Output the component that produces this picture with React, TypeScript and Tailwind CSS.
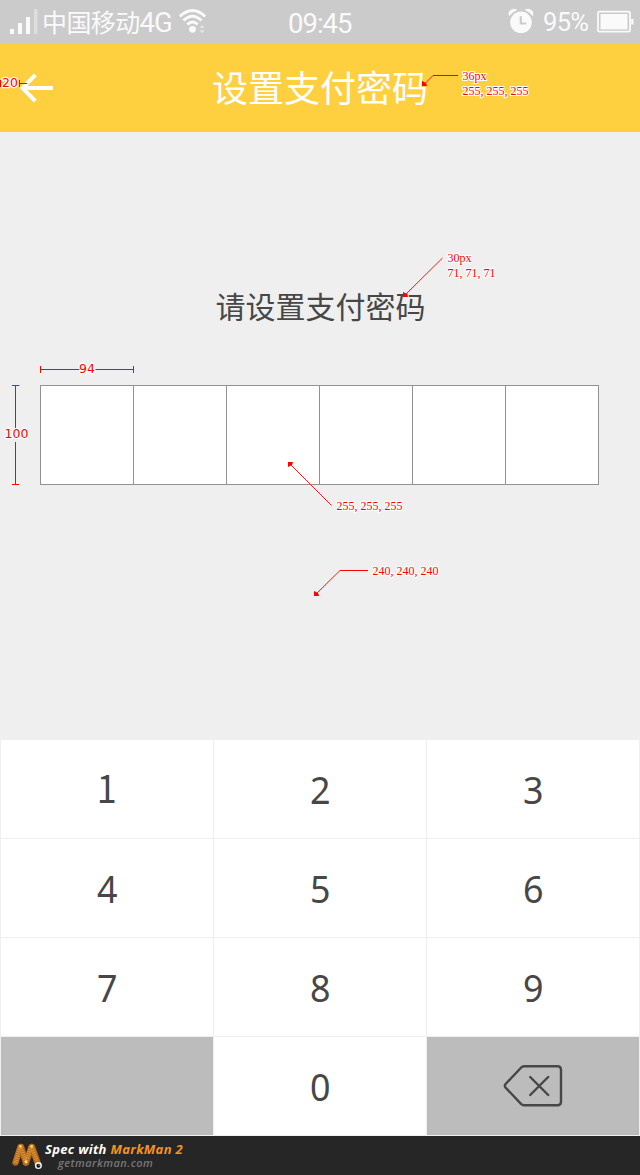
import React from 'react';

const CJK = "font-['Noto_Sans_CJK_SC',sans-serif]";

function StatusBar() {
  return (
    <div className={`relative flex h-11 items-center bg-[#cbcbcb] text-[#fafafa] ${CJK}`}>
      <svg className="ml-[9px] h-[44px] w-[30px]" viewBox="0 0 30 44" fill="#fafafa">
        <rect x="1" y="29" width="4" height="5" />
        <rect x="9" y="23" width="4" height="11" />
        <rect x="17" y="17" width="4" height="17" />
        <rect x="25" y="9" width="3.5" height="25" fill="#dedede" />
      </svg>
      <div className="ml-[3px] flex h-[44px] w-[134px] whitespace-nowrap pb-[2px]">
        <span className="text-[25px] leading-[42px] tracking-[-0.6px]">中国移动</span>
        <span className="pt-px font-['Roboto',sans-serif] text-[27.5px] leading-[44px] tracking-[-1px]">4G</span>
      </div>
      <svg className="ml-[3px] h-[44px] w-[28px]" viewBox="0 0 28 44" fill="none" stroke="#fafafa" strokeWidth="3">
        <path d="M0.8 16.5 Q13.5 4.5 26.2 16.5" />
        <path d="M4.5 20.5 Q13.5 12 22.5 20.5" />
        <path d="M8.3 24.5 Q13.5 19.5 18.7 24.5" />
        <circle cx="13.5" cy="29.3" r="3.4" fill="#fafafa" stroke="none" />
        <path d="M20.5 28 L23 25 L25.5 28Z M20.5 30.3 L25.5 30.3 L23 33.3Z" fill="#e6e6e6" stroke="none" />
      </svg>
      <span className="absolute left-[288px] top-[2px] whitespace-nowrap font-['Roboto',sans-serif] text-[27.5px] leading-[44px] tracking-[-1px]">09:45</span>
      <div className="ml-auto mr-[6px] flex items-center">
        <svg className="h-[44px] w-[26px]" viewBox="0 0 26 44">
          <g fill="#fafafa">
            <circle cx="13" cy="22.3" r="10.8" />
            <path d="M1.3 15.5 Q0.2 12 2.6 10.4 Q5.4 8.4 8.6 9.8 Q4 11.8 1.3 15.5Z M24.7 15.5 Q25.8 12 23.4 10.4 Q20.6 8.4 17.4 9.8 Q22 11.8 24.7 15.5Z" stroke="#fafafa" strokeWidth="1" />
          </g>
          <path d="M12.8 16.3 V23.5 H18.3" fill="none" stroke="#cbcbcb" strokeWidth="2.2" />
        </svg>
        <span className="ml-[9px] w-[48px] whitespace-nowrap font-['Roboto',sans-serif] text-[25.5px] leading-[42px] tracking-[-0.7px]">95%</span>
        <svg className="ml-[5px] h-[44px] w-[38px]" viewBox="0 0 38 44" fill="none">
          <rect x="2" y="11.7" width="32" height="20" rx="1.5" stroke="#fafafa" strokeWidth="1.8" />
          <rect x="4.5" y="14" width="27" height="15.4" fill="#fafafa" />
          <path d="M35.2 19 h2.3 v5.5 h-2.3z" fill="#fafafa" />
        </svg>
      </div>
    </div>
  );
}

function Header() {
  return (
    <header className="relative flex h-[88px] items-center justify-center bg-[#fed03f]">
      <svg className="absolute left-[20px] top-[29px] h-[30px] w-[34px]" viewBox="0 0 34 30" fill="none" stroke="#fff" strokeWidth="4">
        <path d="M2.5 15 H33 M15.3 1.8 L2.6 15 L15.3 28.2" />
      </svg>
      <h1 className={`whitespace-nowrap pb-[3px] text-[36px] leading-[85px] text-white ${CJK}`}>设置支付密码</h1>
    </header>
  );
}

function BackspaceIcon() {
  return (
    <svg className="h-[44px] w-[60px]" viewBox="0 0 60 44" fill="none" stroke="#474747" strokeWidth="2.4" strokeLinecap="round" strokeLinejoin="round">
      <path d="M21 2.3 H54.5 Q58 2.3 58 5.8 V37.7 Q58 41.2 54.5 41.2 H21 Q19.5 41.2 18 39.8 L2.6 23.6 Q1 21.8 2.6 20 L18 3.7 Q19.5 2.3 21 2.3Z" />
      <path d="M27.2 13 L45.2 31 M45.2 13 L27.2 31" />
    </svg>
  );
}

function Key({ label }: { label: string }) {
  const font =
    label === '1' ? "font-['Noto_Sans_CJK_SC',sans-serif] pb-[5px] pr-px" : "font-['Noto_Sans',sans-serif] pb-[2px]";
  return (
    <button className={`flex h-[98px] items-center justify-center bg-white text-[39px] leading-none text-[#474747] ${font}`}>
      <span className="scale-x-[0.92]">{label}</span>
    </button>
  );
}

function Keypad() {
  return (
    <div className="grid grid-cols-3 gap-px bg-[#efefef] px-px pb-px">
      {['1', '2', '3', '4', '5', '6', '7', '8', '9'].map((n) => (
        <Key key={n} label={n} />
      ))}
      <div className="h-[98px] bg-[#bcbcbc]" />
      <Key label="0" />
      <button className="flex h-[98px] items-center justify-center bg-[#bcbcbc]">
        <BackspaceIcon />
      </button>
    </div>
  );
}

function Footer() {
  return (
    <footer className="flex h-[39px] bg-[#262626]">
      <svg className="ml-[11px] mt-[6px] h-[30px] w-[34px]" viewBox="0 0 34 30" fill="none" strokeLinecap="round">
        <g stroke="#b56a1b" strokeWidth="6.4">
          <path d="M9.5 5 L4.5 20.5" />
          <path d="M10 5 L15 20.5" />
          <path d="M20.5 5 L15 20.5" />
          <path d="M21 5 L27 22" />
        </g>
        <g stroke="#d9943c" strokeWidth="4" strokeLinecap="butt" strokeDasharray="1.2 1">
          <path d="M9 5 L4.5 21" />
          <path d="M20 5 L15 20" />
          <path d="M10 6 L15 20" />
          <path d="M21 6 L26 19" />
        </g>
        <circle cx="9.5" cy="4.2" r="1.3" fill="#ffe07a" />
        <circle cx="20.7" cy="4.2" r="1.3" fill="#ffe07a" />
        <circle cx="15" cy="20" r="1.4" fill="#ffe07a" />
        <circle cx="27.4" cy="23.6" r="3.5" fill="#f4f4f4" />
        <circle cx="27.4" cy="23.8" r="2" fill="#111" />
        <circle cx="28" cy="23.1" r="0.6" fill="#fff" />
      </svg>
      <div className="flex flex-col whitespace-nowrap pt-[5px] font-['Open_Sans',sans-serif] italic">
        <span className="text-[13px] font-bold leading-[17px] tracking-[0.33px] text-white">
          Spec with <span className="text-[#f7931a]">MarkMan 2</span>
        </span>
        <span className="ml-[13px] text-[11px] font-semibold leading-[10px] tracking-[0.45px] text-[#777]">getmarkman.com</span>
      </div>
    </footer>
  );
}

function Annotations() {
  return (
    <svg className="pointer-events-none absolute left-0 top-0 h-[1175px] w-[640px]" viewBox="0 0 640 1175" fill="none">
      <g stroke="#f00" shapeRendering="crispEdges">
        <path d="M0.5 80 V87 M19.5 80 V87 M20 83.5 H27" />
        <path d="M40.5 366 V373 M133.5 366 V373 M41 369.5 H133" />
        <path d="M12 385.5 H19 M12 484.5 H19 M15.5 386 V484" />
        <path d="M433 75.5 H458 M340 570.5 H368" />
      </g>
      <g stroke="#f00" strokeWidth="0.9">
        <path d="M433 75.5 L424 84.5" />
        <path d="M442.5 258 L404 296" />
        <path d="M331.5 505.5 L290 464" />
        <path d="M340 570.5 L315 595" />
      </g>
      <g fill="#f00">
        <path d="M422 81 L426 83 L427 86 H422Z" />
        <path d="M403 292 L407 294 L408 297 H403Z" />
        <path d="M288 462 H293 L292 465 L288 467Z" />
        <path d="M314 591 L318 593 L319 596 H314Z" />
      </g>
      <g
        className="font-['DejaVu_Sans',sans-serif] text-[12.5px]"
        fill="#f00"
        stroke="#fff"
        strokeWidth="2.5"
        strokeLinejoin="round"
        paintOrder="stroke"
      >
        <text x="2" y="87">20</text>
        <text x="79" y="373">94</text>
        <path d="M13 428 h5 v14 h-5z" fill="#efefef" stroke="none" />
        <text x="4.5" y="438">100</text>
      </g>
      <g
        className="font-['Liberation_Serif',serif] text-[12px]"
        fill="#f00"
        stroke="#fff"
        strokeWidth="2.2"
        strokeLinejoin="round"
        paintOrder="stroke"
      >
        <text x="462.5" y="80">36px</text>
        <text x="462.5" y="95">255, 255, 255</text>
        <text x="447.5" y="262">30px</text>
        <text x="447.5" y="277">71, 71, 71</text>
        <text x="336.5" y="510">255, 255, 255</text>
        <text x="372.5" y="575">240, 240, 240</text>
      </g>
    </svg>
  );
}

export default function App() {
  return (
    <div className="relative flex h-[1175px] w-[640px] flex-col overflow-hidden bg-[#efefef]">
      <StatusBar />
      <Header />
      <main className="flex flex-1 flex-col items-start">
        <p className={`ml-[215.5px] mt-[148px] whitespace-nowrap text-[30px] leading-[50px] text-[#474747] ${CJK}`}>请设置支付密码</p>
        <div className="ml-[40px] mt-[55px] grid h-[100px] w-[559px] grid-cols-6 gap-px bg-[#929292] p-px">
          {[0, 1, 2, 3, 4, 5].map((i) => (
            <div key={i} className="bg-white" />
          ))}
        </div>
      </main>
      <Keypad />
      <Footer />
      <Annotations />
    </div>
  );
}
